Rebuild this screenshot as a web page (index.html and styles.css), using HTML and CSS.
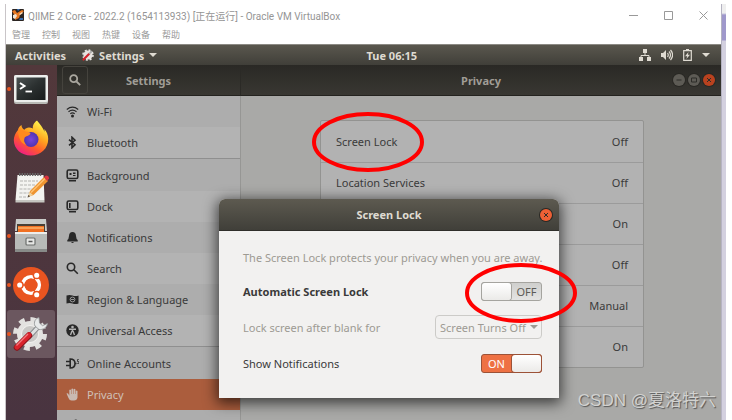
FILE: index.html
```html
<!DOCTYPE html>
<html lang="en">
<head>
  <meta charset="UTF-8">
  <meta name="viewport" content="width=device-width, initial-scale=1.0">
  <title>QIIME 2 Core - Oracle VM VirtualBox</title>
  <link rel="stylesheet" href="styles.css">
</head>
<body>
  <div class="vm">
    <header class="titlebar">
      <svg class="vm-logo" viewBox="0 0 12 12"><rect width="12" height="12" rx="1" fill="#2b2522"/><path d="M0 2l3-1 2 3 5-3 2 1-4 4-1 3-4 2 0-4z" fill="#e87822"/><path d="M1 6l3-1 1 2-2 3-2-1z" fill="#f3e3d0"/><path d="M7 5l3-2 1 1-3 2z" fill="#f7d9b8"/><path d="M5 0h3L6 2zM8 9h3v2H7z" fill="#3a70b5"/></svg>
      <span class="vm-title">QIIME 2 Core - 2022.2 (1654113933) [正在运行] - Oracle VM VirtualBox</span>
      <div class="win-buttons">
        <button aria-label="Minimize"><svg viewBox="0 0 9 9"><path d="M0 4.500h9"/></svg></button>
        <button aria-label="Maximize"><svg viewBox="0 0 9 9"><path d="M.5.5h8v8h-8z"/></svg></button>
        <button aria-label="Close"><svg viewBox="0 0 9 9"><path d="M.5.5l8 8M8.5.5l-8 8"/></svg></button>
      </div>
    </header>
    <nav class="menubar">
      <button>管理</button>
      <button>控制</button>
      <button>视图</button>
      <button>热键</button>
      <button>设备</button>
      <button>帮助</button>
    </nav>

    <div class="topbar">
      <div class="topbar-left">
        <button>Activities</button>
        <button class="app-menu">
          <svg class="app-icon" viewBox="0 0 12 12"><circle cx="6" cy="6" r="4.600" fill="#e6e4e1"/><circle cx="6" cy="6" r="5" fill="none" stroke="#e6e4e1" stroke-width="1.600" stroke-dasharray="2 1.930"/><path d="M1.500 10.500L7 5" stroke="#d3222a" stroke-width="2.200" stroke-linecap="round"/><path d="M7 5l3-3" stroke="#aaa" stroke-width="1.600"/></svg>
          Settings
          <svg class="caret" viewBox="0 0 8 4"><path d="M0 0h8L4 4z"/></svg>
        </button>
      </div>
      <button class="clock">Tue 06:15</button>
      <div class="tray">
        <svg width="12" height="12" viewBox="0 0 12 12"><path d="M4 0h4v4H4zM0 8h4v4H0zM8 8h4v4H8z"/><path d="M6 4v2.500M2 8V6.500h8V8" fill="none" stroke="#dfdbd2"/></svg>
        <svg width="12" height="12" viewBox="0 0 12 12"><path d="M0 4h2l3-3v10L2 8H0z"/><path d="M6.500 4q1.500 2 0 4M8 2.500q3 3.500 0 7M9.500 1q4.200 5 0 10" fill="none" stroke="#dfdbd2" stroke-width="1.200"/></svg>
        <svg width="9" height="12" viewBox="0 0 9 12"><path d="M.7 1.700h7.600v9.600H.7z" fill="none" stroke="#dfdbd2" stroke-width="1.200"/><path d="M3 0h3v2H3zM5.500 3L2 7.200h2.200L3.400 10 7 5.800H4.900z"/></svg>
        <svg class="caret" viewBox="0 0 8 4"><path d="M0 0h8L4 4z"/></svg>
      </div>
    </div>

    <div class="desktop">
      <aside class="dock">
        <button class="dock-item running" aria-label="Terminal">
          <svg viewBox="0 0 36 36"><defs><linearGradient id="term" x2="1" y2="1"><stop offset="0" stop-color="#4c5252"/><stop offset=".5" stop-color="#2b3030"/><stop offset="1" stop-color="#181b1b"/></linearGradient></defs><rect x="1" y="4" width="34" height="29" rx="2" fill="#b9bab6"/><rect x="1" y="4" width="34" height="27" rx="2" fill="#eceeec"/><rect x="3.500" y="6.500" width="29" height="22.500" fill="url(#term)"/><path d="M7 12l4.500 3L7 18" fill="none" stroke="#fff" stroke-width="2"/><path d="M12.500 20.500h6.500" stroke="#fff" stroke-width="1.800"/></svg>
        </button>
        <button class="dock-item" aria-label="Firefox">
          <svg viewBox="0 0 36 36"><defs><linearGradient id="fox" x1=".8" y1=".1" x2=".25" y2="1"><stop offset="0" stop-color="#fff04a"/><stop offset=".35" stop-color="#ffa51f"/><stop offset=".65" stop-color="#ff5a2c"/><stop offset="1" stop-color="#ef1a8a"/></linearGradient><radialGradient id="globe"><stop offset="0" stop-color="#7745dc"/><stop offset="1" stop-color="#4f34b0"/></radialGradient></defs><path d="M24 .5c-4 3-4.500 6-4 8-4-2-7-1-8.500 1.200C9.500 9 8.500 7 8.500 5 6 6.500 5 9 5 10 2.500 13 .8 16.500.8 20c0 9 7.600 15.500 17 15.500 10 0 17.400-7 17.400-16.500 0-4-1.700-7.800-4-10l.5 3C30 8 27 4 24 .5z" fill="url(#fox)"/><circle cx="18" cy="19.500" r="7.500" fill="url(#globe)"/><path d="M5 11c2-1.500 5-1.300 7.500.5 2 .2 4 .5 5 2-1 2.500-5 2.500-6 4.500-1 3 0 5 2 7-4-.5-8-5-8.500-14z" fill="#ff8a1e"/></svg>
        </button>
        <button class="dock-item" aria-label="Text Editor">
          <svg viewBox="0 0 36 36"><path d="M4.500 6h26l1 25H2.500z" fill="#f3f3f0"/><path d="M2.500 31h29v2.500h-29z" fill="#c6c6c1"/><path d="M6 5.500h23" stroke="#666" stroke-width="3" stroke-dasharray="1.400 1.200"/><path d="M7 12h18M7 16h16M6.500 20h13M6.500 24h11M6 28h10" stroke="#b3b3b0" stroke-dasharray="3 1"/><path d="M15 28l2-6L31 8l4 4-14.500 14z" fill="#ee9430"/><path d="M18 23.500L32 9.500" stroke="#ffc373" stroke-width="1.500"/><path d="M31 8l2-1.500q3 0 3 3L34 12z" fill="#dd3540"/><path d="M15 28l1.500-5 3.500 3z" fill="#ecd3a4"/><path d="M15 28l.5-2 1.500 1.200z" fill="#222"/></svg>
        </button>
        <button class="dock-item running" aria-label="Files">
          <svg viewBox="0 0 36 36"><path d="M3 1h30l1 12H2z" fill="#c9cbc8"/><path d="M4 6h28v8H4z" fill="#4a4035"/><path d="M5 8h26v6H5z" fill="#f07022"/><path d="M5 10h26" stroke="#ffc27a" stroke-width="1.200"/><path d="M2 14h32v17H2z" fill="#b8bab8"/><path d="M2 14h32v2H2z" fill="#ededeb"/><path d="M2 31h32v3H2z" fill="#888b89"/><rect x="13" y="20" width="9" height="7" rx="1" fill="#e6e7e5" stroke="#6c6f6d" stroke-width="1.200"/><path d="M15.500 23.500h4" stroke="#555" stroke-width="1.500"/></svg>
        </button>
        <button class="dock-item running" aria-label="Ubuntu">
          <svg viewBox="0 0 36 36"><circle cx="18" cy="18" r="18" fill="#e95420"/><circle cx="18" cy="18" r="8.300" fill="none" stroke="#fff" stroke-width="3.600"/><g stroke="#e95420" stroke-width="1.500"><path d="M18 18H4M18 18l7-12.100M18 18l7 12.100"/><circle cx="6.700" cy="18" r="3.300" fill="#fff"/><circle cx="23.700" cy="8.200" r="3.300" fill="#fff"/><circle cx="23.700" cy="27.800" r="3.300" fill="#fff"/></g><circle cx="18" cy="18" r="6.500" fill="#e95420"/></svg>
        </button>
        <button class="dock-item running active" aria-label="Settings">
          <svg viewBox="0 0 36 36"><circle cx="17" cy="18" r="14.500" fill="none" stroke="#e1e0de" stroke-width="5" stroke-dasharray="5.700 5.690"/><circle cx="17" cy="18" r="13" fill="#e4e3e1"/><circle cx="17" cy="18" r="8.500" fill="#c9c8c6" stroke="#f3f2f0"/><path d="M15 22L27 9" stroke="#85888a" stroke-width="5"/><path d="M15 22L27 9" stroke="#dfe1e2" stroke-width="3.200"/><path d="M26 1.500c-4 1-5.500 5-4 8.500l4 3.500c4 .5 8-2 8.500-6l-5 2.200-3-2.700z" fill="#e8eaea" stroke="#8d9092" stroke-width=".8"/><path d="M4 31.500L16 19.500" stroke="#8c151c" stroke-width="6.500" stroke-linecap="round"/><path d="M4 31L16 19" stroke="#d9232c" stroke-width="5" stroke-linecap="round"/><path d="M3.500 29.500L15 18" stroke="#f37a7e" stroke-width="1.200"/></svg>
        </button>
      </aside>

      <main class="settings">
        <section class="sidebar">
          <div class="headerbar">
            <button class="search-btn" aria-label="Search"><svg viewBox="0 0 12 12"><circle cx="4.700" cy="4.700" r="3.500"/><path d="M7.500 7.500l3.700 3.700"/></svg></button>
            <h1>Settings</h1>
          </div>
          <nav class="panels">
            <a href="#wifi"><svg viewBox="0 0 13 13"><path d="M.8 4.500q5.700-4.600 11.400 0M2.500 6.700q4-3.200 8 0M4.300 8.800q2.200-1.700 4.400 0" class="line"/><circle cx="6.500" cy="11" r="1.500"/></svg>Wi-Fi</a>
            <a href="#bluetooth"><svg viewBox="0 0 13 13"><path d="M3 3.700l6 5-3 3V1.300l3 3-6 5" class="line bold"/></svg>Bluetooth</a>
            <a href="#background" class="group"><svg viewBox="0 0 13 13"><rect x="1.200" y="1" width="10.600" height="8.500" rx="1.500" class="line bold"/><path d="M3.500 4h2v2h-2zM7 3.500h2.500V5H7zM7 6h2.500v1H7zM3 11h7v1.500H3z"/></svg>Background</a>
            <a href="#dock"><svg viewBox="0 0 13 13"><rect x="1.200" y="1" width="10.600" height="8.500" rx="1.500" class="line bold"/><path d="M3 3h1.600v5H3zM3 11h7v1.500H3z"/></svg>Dock</a>
            <a href="#notifications"><svg viewBox="0 0 13 13"><path d="M6.500 1Q9.800 1 10 5q.2 3 1.700 4v1.500H1.300V9Q2.800 8 3 5q.2-4 3.500-4zM5 11h3q-1.500 2.200-3 0z"/></svg>Notifications</a>
            <a href="#search"><svg viewBox="0 0 13 13"><circle cx="5" cy="5" r="3.700" class="line bold"/><path d="M7.800 7.800l4 4" class="line bold"/></svg>Search</a>
            <a href="#region"><svg viewBox="0 0 13 13"><path d="M.5 2.500q3-1.200 6 0t6 0v8q-3 1.200-6 0t-6 0z"/><circle cx="6.500" cy="6.500" r="2.400" class="hole"/><path d="M5 6.500h3" class="hole"/></svg>Region &amp; Language</a>
            <a href="#access"><svg viewBox="0 0 13 13"><circle cx="6.500" cy="6.500" r="6.200"/><circle cx="6.500" cy="3" r="1.300" fill="#b3b3b3"/><path d="M3 5.200h7M6.500 5v3M6 7l-1.500 4M7 7l1.500 4" class="hole wide"/></svg>Universal Access</a>
            <a href="#accounts" class="group"><svg viewBox="0 0 13 13"><path d="M0 4.500h3.500M0 8.500h3.500M4.200 2v9q4.800 0 4.800-4.500T4.200 2zM9 6.500h1.500" class="line bold"/><path d="M12.800 2.500h-1.300v2h1.300v2h-1.500" class="line thin"/></svg>Online Accounts</a>
            <a href="#privacy" class="selected"><svg viewBox="0 0 13 13"><path d="M.5 5.500q1.300-.8 1.800.2l1 2V2q.8-1 1.700 0v4h.4V1q.9-1 1.800 0v5h.4V1.300q.9-1 1.800 0V6h.4V3q.9-.9 1.700 0v6.500q-.5 3-3.500 3H5.500q-2 0-3-2.500z"/></svg>Privacy</a>
            <a href="#sharing" aria-label="Sharing"><svg viewBox="0 0 13 13"><path d="M3.500 6.500l6-4M3.500 6.500l6 4" class="line"/><circle cx="3" cy="6.500" r="2"/><circle cx="9.800" cy="2.500" r="2"/><circle cx="9.800" cy="10.500" r="2"/></svg></a>
          </nav>
        </section>

        <section class="content">
          <div class="headerbar">
            <h1>Privacy</h1>
            <div class="controls">
              <button class="round" aria-label="Minimize"><svg viewBox="0 0 12 12"><path d="M3.500 6h5"/></svg></button>
              <button class="round" aria-label="Maximize"><svg viewBox="0 0 12 12"><path d="M3.500 4h5v4h-5z"/></svg></button>
              <button class="round close" aria-label="Close"><svg viewBox="0 0 12 12"><path d="M4 4l4 4M8 4L4 8"/></svg></button>
            </div>
          </div>
          <div class="privacy-list">
            <button class="privacy-row"><span class="marked">Screen Lock<svg class="mark mark-row" viewBox="0 0 112 60"><ellipse cx="56" cy="30" rx="54" ry="28"/></svg></span><span>Off</span></button>
            <button class="privacy-row"><span>Location Services</span><span>Off</span></button>
            <button class="privacy-row"><span></span><span>On</span></button>
            <button class="privacy-row"><span></span><span>Off</span></button>
            <button class="privacy-row"><span></span><span>Manual</span></button>
            <button class="privacy-row"><span></span><span>On</span></button>
          </div>
        </section>

        <div class="dialog" role="dialog" aria-labelledby="dialog-title">
          <div class="dialog-header">
            <h2 id="dialog-title">Screen Lock</h2>
            <button class="round close" aria-label="Close"><svg viewBox="0 0 12 12"><path d="M4 4l4 4M8 4L4 8"/></svg></button>
          </div>
          <div class="dialog-body">
            <p>The Screen Lock protects your privacy when you are away.</p>
            <div class="option">
              <label for="auto-lock" class="strong">Automatic Screen Lock</label>
              <div class="switch marked">
                <input type="checkbox" id="auto-lock">
                <span>OFF</span>
                <svg class="mark mark-switch" viewBox="0 0 112 60"><ellipse cx="56" cy="30" rx="54" ry="28"/></svg>
              </div>
            </div>
            <div class="option disabled">
              <label for="delay">Lock screen after blank for</label>
              <div class="select">
                <select id="delay" disabled><option>Screen Turns Off</option></select>
                <svg class="caret" viewBox="0 0 8 4"><path d="M0 0h8L4 4z"/></svg>
              </div>
            </div>
            <div class="option">
              <label for="show-notif">Show Notifications</label>
              <div class="switch">
                <input type="checkbox" id="show-notif" checked>
                <span>ON</span>
              </div>
            </div>
          </div>
        </div>
      </main>
    </div>
  </div>
  <div class="behind"></div>
  <div class="watermark">CSDN @夏洛特六</div>
</body>
</html>
```
FILE: styles.css
```css
* {
  box-sizing: border-box;
}
body {
  margin: 0;
  padding: 4px 6px 0 5px;
  height: 100vh;
  display: flex;
  overflow: hidden;
  position: relative;
  background: #fff;
  font-family: "Noto Sans", "Open Sans", sans-serif;
  font-size: 11px;
  color: #3a3a3a;
}
button, select {
  font: inherit;
  color: inherit;
  background: none;
  border: none;
  padding: 0;
}
h1, h2, p {
  margin: 0;
  font-size: 11px;
}
svg {
  display: block;
  flex: none;
}
.vm {
  flex: 1;
  display: flex;
  flex-direction: column;
  border-left: 1px solid #c9c5c8;
  min-width: 0;
}
.behind {
  width: 5px;
  background: linear-gradient(#eee 9px, #9f98cb 11px, #9f98cb 36px, #d3d0df 37px);
  border-left: 1px solid #b5b3c2;
}

/* host window */
.titlebar {
  height: 22px;
  padding-left: 6px;
  display: flex;
  align-items: center;
  gap: 4px;
  font-family: Roboto, "Noto Sans CJK SC", sans-serif;
  font-size: 10px;
  color: #959595;
}
.vm-logo {
  width: 12px;
}
.vm-title {
  flex: 1;
  white-space: nowrap;
}
.win-buttons {
  display: flex;
  gap: 26px;
  padding-right: 13px;
}
.win-buttons svg {
  width: 9px;
  fill: none;
  stroke: #999;
}
.menubar {
  height: 18px;
  padding-left: 6px;
  display: flex;
  gap: 12px;
  font-family: "Noto Sans CJK SC", sans-serif;
  font-size: 9px;
  line-height: 18px;
  color: #999;
}

/* guest top bar */
.topbar {
  height: 21px;
  flex: none;
  padding: 0 11px 0 9px;
  display: grid;
  grid-template-columns: 6fr auto 5fr;
  align-items: center;
  background: linear-gradient(#5a574e, #403f39);
  border-top: 1px solid #8c8a84;
  color: #dfdbd2;
  font-weight: bold;
}
.topbar-left, .app-menu, .tray {
  display: flex;
  align-items: center;
}
.topbar-left {
  gap: 16px;
}
.app-menu {
  gap: 5px;
}
.app-icon {
  width: 12px;
}
.caret {
  width: 8px;
  fill: currentColor;
}
.tray {
  justify-content: flex-end;
  gap: 10px;
  fill: #dfdbd2;
}

.desktop {
  flex: 1;
  display: flex;
  min-height: 0;
}
.dock {
  width: 51px;
  padding: 0 2px 0 1px;
  display: flex;
  flex-direction: column;
  gap: 1px;
  background: linear-gradient(#52383b, #493440);
}
.dock-item {
  position: relative;
  height: 48px;
  flex: none;
  display: grid;
  place-items: center;
  border-radius: 3px;
}
.dock-item svg {
  width: 36px;
}
.dock-item.active {
  background: #6b575f;
}
.dock-item.running::before {
  content: "";
  position: absolute;
  left: 0;
  top: 22px;
  width: 4px;
  height: 4px;
  border-radius: 50%;
  background: #e95420;
}

/* settings window */
.settings {
  flex: 1;
  display: flex;
  position: relative;
  min-width: 0;
  background: #a9a9a7;
}
.headerbar {
  height: 31px;
  flex: none;
  display: grid;
  grid-template-columns: 1fr auto 1fr;
  align-items: center;
  background: linear-gradient(#2a2925, #393732);
  border-bottom: 1px solid #24231f;
  color: #a09d96;
}
.headerbar h1 {
  grid-column: 2;
}
.sidebar {
  width: 184px;
  display: flex;
  flex-direction: column;
  background: #b3b3b3;
}
.sidebar .headerbar {
  border-right: 1px solid #2b2a26;
}
.search-btn {
  width: 26px;
  height: 28px;
  margin-left: 5px;
  display: grid;
  place-items: center;
  border: 1px solid #45433d;
  border-radius: 3px;
}
.search-btn svg {
  width: 12px;
  fill: none;
  stroke: #aaa79f;
  stroke-width: 1.8;
}
.panels {
  flex: 1;
  min-height: 0;
  overflow: hidden;
  border-right: 1px solid #969694;
}
.panels a {
  height: 31px;
  padding-left: 9px;
  display: flex;
  align-items: center;
  gap: 8px;
  color: #3a3a3a;
  text-decoration: none;
}
.panels a:nth-child(odd) {
  background: #adadad;
}
.panels a.group {
  height: 33px;
  border-top: 1px solid #8f8f8f;
}
.panels a.selected {
  background: #ab5d3d;
  color: #d0c0b8;
}
.panels svg {
  width: 13px;
  fill: #282828;
}
.panels .selected svg {
  fill: #c9bab3;
}
.panels .line {
  fill: none;
  stroke: #282828;
  stroke-width: 1.2;
}
.panels .bold {
  stroke-width: 1.6;
}
.panels .thin {
  stroke-width: 0.8;
}
.panels .hole {
  fill: none;
  stroke: #b3b3b3;
  stroke-width: 0.8;
}
.panels .wide {
  stroke-width: 1.4;
}
.content {
  flex: 1;
  display: flex;
  flex-direction: column;
  min-width: 0;
}
.controls {
  display: flex;
  justify-content: flex-end;
  gap: 3px;
  padding-right: 6px;
}
.round {
  width: 12px;
  height: 12px;
  border-radius: 50%;
  background: #5d5b55;
  box-shadow: 0 0 0 1px #292824;
}
.round svg {
  width: 12px;
  fill: none;
  stroke: #2d2c28;
}
.headerbar .close {
  background: #b9421f;
}
.privacy-list {
  margin: 24px 77px 0 79px;
  border: 1px solid #939391;
  border-radius: 2px;
  background: #b2b2b2;
}
.privacy-row {
  width: 100%;
  height: 41px;
  padding: 0 15px 1px;
  display: flex;
  justify-content: space-between;
  align-items: center;
}
.privacy-row + .privacy-row {
  border-top: 1px solid #9b9b9b;
}

/* screen lock dialog */
.dialog {
  position: absolute;
  top: 134px;
  left: 50%;
  width: 340px;
  transform: translateX(-50%);
  border-radius: 6px 6px 0 0;
  background: #f2f1f0;
  box-shadow: 0 3px 14px 2px rgba(0, 0, 0, 0.65);
}
.dialog-header {
  height: 32px;
  display: grid;
  grid-template-columns: 1fr auto 1fr;
  align-items: center;
  border-radius: 6px 6px 0 0;
  background: linear-gradient(#5d5a50, #403f39);
  border-bottom: 1px solid #2f2e2a;
  color: #dfdbd2;
}
.dialog-header h2 {
  grid-column: 2;
}
.dialog-header .close {
  justify-self: end;
  margin-right: 7px;
  background: #ee6035;
}
.dialog-body {
  padding: 17px 17px 23px 24px;
  display: flex;
  flex-direction: column;
  gap: 12px;
}
.dialog-body p {
  line-height: 19px;
  white-space: nowrap;
  color: #9d9a93;
}
.option {
  height: 24px;
  display: flex;
  justify-content: space-between;
  align-items: center;
}
.option.disabled {
  color: #9d9a93;
}
.strong {
  font-weight: bold;
}
.switch {
  display: grid;
  width: 61px;
  height: 19px;
}
.switch input, .switch span {
  grid-area: 1 / 1;
}
.switch input {
  appearance: none;
  margin: 0;
  display: flex;
  border: 1px solid #a5a49f;
  border-radius: 3px;
  background: linear-gradient(#cfcfcd, #e4e4e3);
}
.switch input::before {
  content: "";
  width: 29px;
  border-radius: 3px;
  background: linear-gradient(#fff, #ebeae8);
  box-shadow: 0 0 0 1px #a5a49f;
}
.switch input:checked {
  justify-content: flex-end;
  border-color: #9c5237;
  background: #ee7143;
}
.switch input:checked::before {
  box-shadow: 0 0 0 1px #9c5237;
}
.switch span {
  width: 31px;
  justify-self: end;
  align-self: center;
  text-align: center;
  color: #5c5b57;
  pointer-events: none;
  z-index: 1;
}
.switch input:checked + span {
  justify-self: start;
  color: #fff;
}
.select {
  width: 107px;
  display: grid;
  align-items: center;
}
.select select, .select .caret {
  grid-area: 1 / 1;
}
.select select {
  appearance: none;
  height: 24px;
  padding: 0 4px;
  border: 1px solid #cccbc8;
  border-radius: 4px;
  opacity: 1;
}
.select .caret {
  justify-self: end;
  margin-right: 4px;
}

/* red pen marks */
.marked {
  position: relative;
}
.mark {
  position: absolute;
  width: 112px;
  height: 60px;
  fill: none;
  stroke: #f00;
  stroke-width: 4;
  pointer-events: none;
}
.mark-row {
  left: -24px;
  top: -22px;
}
.mark-switch {
  left: -16px;
  top: -19px;
  z-index: 2;
}
.watermark {
  position: absolute;
  right: 16px;
  bottom: 6px;
  font: 17px/26px "Liberation Sans", "Noto Sans CJK SC", sans-serif;
  color: #d2d2d0;
  text-shadow: 1px 1px 1px #555;
}
```
